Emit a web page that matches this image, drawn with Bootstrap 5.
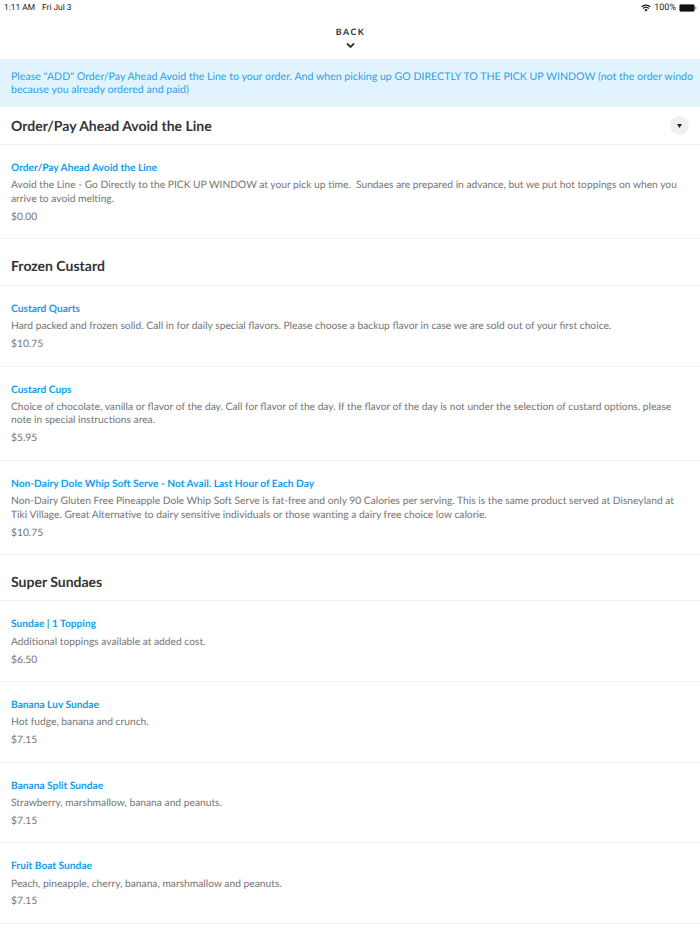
<!DOCTYPE html>
<html lang="en">
<head>
<meta charset="utf-8">
<title>Menu</title>
<link rel="stylesheet" href="https://cdn.jsdelivr.net/npm/bootstrap@5.3.0/dist/css/bootstrap.min.css">
<style>
html,body{height:934px;overflow:hidden;background:#fff}
body{font-family:Lato,"Liberation Sans",sans-serif;color:#333;text-rendering:geometricPrecision}
.status-row{height:14px;padding:2px 3px 0 4px;font-family:Roboto,"Liberation Sans",sans-serif;font-size:9px;color:#222;line-height:12px}
.status-left{font-size:8.4px}
.status-gap{margin-left:7px}
.status-right{gap:3px}
.back-area{height:45px;padding-top:11px;text-align:center}
.back-label{font-size:8.8px;font-weight:700;letter-spacing:1.5px;line-height:14px;color:#333;padding-left:1px}
.back-chev{display:block;margin:3px auto 0}
.notice-band{height:48px;background:#e1f4fd;color:#2f9fe8;font-size:10.6px;line-height:12.6px;padding:12px 11px 0;white-space:nowrap;overflow:hidden}
.sect-head{border-bottom:1px solid #f1f1f1;padding:0 11px;font-size:14px;font-weight:700;color:#333;line-height:18px;margin:0}
.sect-a{height:38px}
.sect-b{height:46.6px;padding-top:8px}
.sect-c{height:46px;padding-top:8px}
.caret-btn{width:19px;height:19px;border-radius:50%;background:#f0f0f0;display:flex;align-items:center;justify-content:center}
.menu-entry{border-bottom:1px solid #f1f1f1;padding:16px 11px 0;font-size:10.26px;line-height:13.4px;color:#757575}
.entry-name{color:#129de9;font-weight:700;font-size:10.2px;line-height:14px;margin-bottom:4.4px}
.entry-desc{margin-bottom:4.4px}
.h-one{height:80.6px}
.h-two{height:94.4px}
</style>
</head>
<body>
<div class="status-row d-flex justify-content-between align-items-center">
  <span class="status-left">1:11 AM<span class="status-gap">Fri Jul 3</span></span>
  <span class="status-right d-flex align-items-center">
    <svg width="10" height="8" viewBox="0 0 11 8" aria-hidden="true"><path d="M5.5 8 3.8 6a2.4 2.4 0 0 1 3.4 0z" fill="#111"/><path d="M2.5 4.6a4.3 4.3 0 0 1 6 0M.7 2.8a6.9 6.9 0 0 1 9.6 0" fill="none" stroke="#111" stroke-width="1.3"/></svg>
    <span>100%</span>
    <svg width="18" height="8" viewBox="0 0 18 8" aria-hidden="true"><rect x=".3" y=".3" width="15.4" height="7.4" rx="1.8" fill="#111" stroke="#999" stroke-width=".6"/><rect x="16.2" y="2.6" width="1.2" height="2.8" rx=".5" fill="#999"/></svg>
  </span>
</div>
<div class="back-area">
  <div class="back-label">BACK</div>
  <svg class="back-chev" width="9" height="7" viewBox="0 0 9 7" aria-hidden="true"><path d="M1 1.5 4.5 5 8 1.5" fill="none" stroke="#333" stroke-width="1.8"/></svg>
</div>
<div class="notice-band">Please "ADD" Order/Pay Ahead Avoid the Line to your order. And when picking up GO DIRECTLY TO THE PICK UP WINDOW (not the order windo<br>because you already ordered and paid)</div>

<h2 class="sect-head sect-a d-flex justify-content-between align-items-center">
  <span>Order/Pay Ahead Avoid the Line</span>
  <span class="caret-btn"><svg width="5" height="4" viewBox="0 0 5 4" aria-hidden="true"><path d="M0 0h5L2.5 4z" fill="#222"/></svg></span>
</h2>
<div class="menu-entry h-two">
  <div class="entry-name">Order/Pay Ahead Avoid the Line</div>
  <div class="entry-desc">Avoid the Line - Go Directly to the PICK UP WINDOW at your pick up time.&nbsp; Sundaes are prepared in advance, but we put hot toppings on when you arrive to avoid melting.</div>
  <div>$0.00</div>
</div>

<h2 class="sect-head sect-b d-flex align-items-center">Frozen Custard</h2>
<div class="menu-entry h-one">
  <div class="entry-name">Custard Quarts</div>
  <div class="entry-desc">Hard packed and frozen solid. Call in for daily special flavors. Please choose a backup flavor in case we are sold out of your first choice.</div>
  <div>$10.75</div>
</div>
<div class="menu-entry h-two">
  <div class="entry-name">Custard Cups</div>
  <div class="entry-desc">Choice of chocolate, vanilla or flavor of the day. Call for flavor of the day. If the flavor of the day is not under the selection of custard options, please note in special instructions area.</div>
  <div>$5.95</div>
</div>
<div class="menu-entry h-two">
  <div class="entry-name">Non-Dairy Dole Whip Soft Serve - Not Avail. Last Hour of Each Day</div>
  <div class="entry-desc">Non-Dairy Gluten Free Pineapple Dole Whip Soft Serve is fat-free and only 90 Calories per serving. This is the same product served at Disneyland at Tiki Village. Great Alternative to dairy sensitive individuals or those wanting a dairy free choice low calorie.</div>
  <div>$10.75</div>
</div>

<h2 class="sect-head sect-c d-flex align-items-center">Super Sundaes</h2>
<div class="menu-entry h-one">
  <div class="entry-name">Sundae | 1 Topping</div>
  <div class="entry-desc">Additional toppings available at added cost.</div>
  <div>$6.50</div>
</div>
<div class="menu-entry h-one">
  <div class="entry-name">Banana Luv Sundae</div>
  <div class="entry-desc">Hot fudge, banana and crunch.</div>
  <div>$7.15</div>
</div>
<div class="menu-entry h-one">
  <div class="entry-name">Banana Split Sundae</div>
  <div class="entry-desc">Strawberry, marshmallow, banana and peanuts.</div>
  <div>$7.15</div>
</div>
<div class="menu-entry h-one">
  <div class="entry-name">Fruit Boat Sundae</div>
  <div class="entry-desc">Peach, pineapple, cherry, banana, marshmallow and peanuts.</div>
  <div>$7.15</div>
</div>
<script src="https://cdn.jsdelivr.net/npm/bootstrap@5.3.0/dist/js/bootstrap.bundle.min.js"></script>
</body>
</html>
